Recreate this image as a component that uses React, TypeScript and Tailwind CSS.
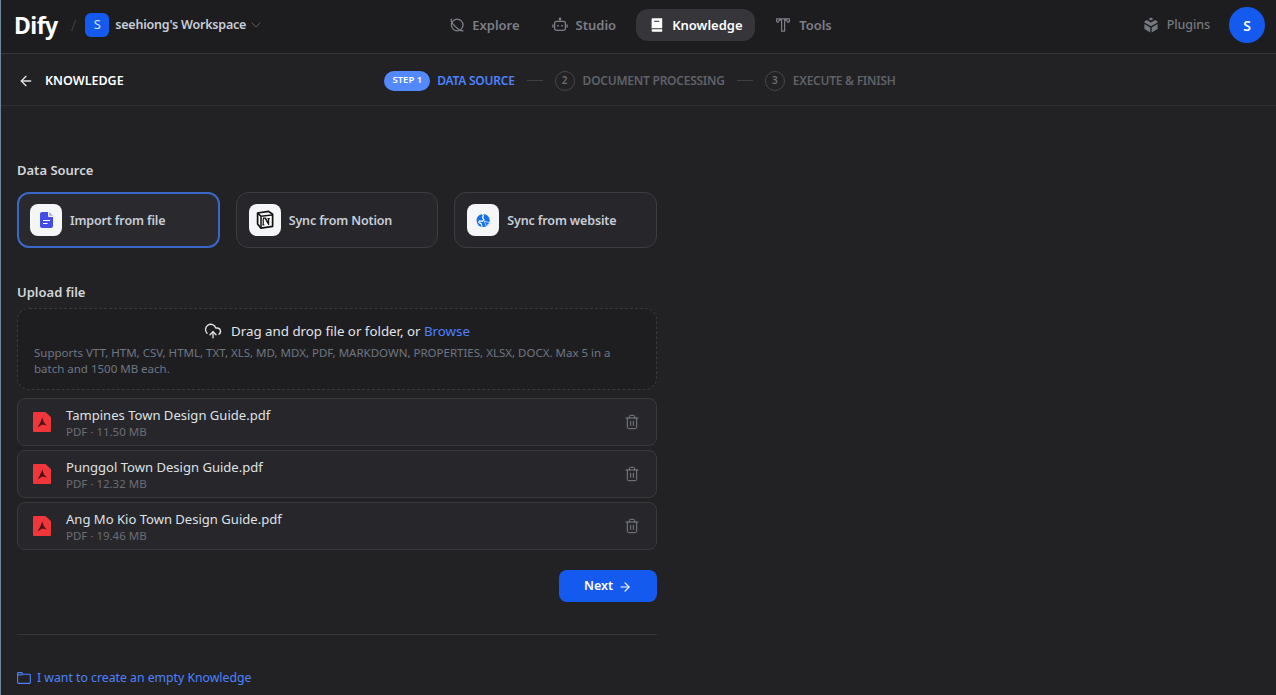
import { ArrowLeft, ArrowRight, ChevronDown, CloudUpload, Trash2 } from "lucide-react";

const font = "font-['Noto_Sans',sans-serif]";

function ExploreIcon() {
  return (
    <svg viewBox="0 0 16 16" className="h-4 w-4 shrink-0" fill="none" stroke="currentColor" strokeWidth="1.3">
      <circle cx="8.2" cy="8" r="5.8" />
      <path d="M2.6 1.8 C1.4 3 3.4 6.6 6.4 9.6 C9.4 12.6 13 14.6 14.4 13.4" />
    </svg>
  );
}

function StudioIcon() {
  return (
    <svg viewBox="0 0 16 16" className="h-4 w-4 shrink-0" fill="none" stroke="currentColor" strokeWidth="1.3">
      <rect x="2.6" y="4.4" width="10.8" height="9" rx="1.8" />
      <path d="M8 4.2V2.2M.9 7.6v2.8M15.1 7.6v2.8" />
      <circle cx="8" cy="1.8" r="0.7" fill="currentColor" />
      <path d="M6 8v1.6M10 8v1.6" strokeWidth="1.6" />
    </svg>
  );
}

function BookIcon() {
  return (
    <svg viewBox="0 0 16 16" className="h-4 w-4 shrink-0" fill="currentColor">
      <path d="M3.8 1.3h9.4v10H4.2c-.7 0-1.2.1-1.6.4V2.5c0-.7.5-1.2 1.2-1.2z" />
      <path d="M2.6 13.2c0-.7.6-1 1.4-1h9.2v2.5H4c-.8 0-1.4-.5-1.4-1.5z" />
      <path d="M5.2 4.3h5" stroke="#35353a" strokeWidth="1.1" />
    </svg>
  );
}

function ToolsIcon() {
  return (
    <svg viewBox="0 0 16 16" className="h-4 w-4 shrink-0" fill="none" stroke="currentColor" strokeWidth="1.2" strokeLinejoin="round">
      <path d="M1.6 1.8h12.8v2.6l-1.4 1-1.6-2.2H9.6v11h-3v-11H4.4L2.8 5.4l-1.2-1z" />
    </svg>
  );
}

function CubeIcon() {
  return (
    <svg viewBox="0 0 16 16" className="h-4 w-4 shrink-0" fill="currentColor">
      <path d="M8 .6l2.5 1.4L8 3.4 5.5 2z" />
      <path d="M3.8 3l4.2 2.4L12.2 3l2.4 1.4v1.2L8 9.3 1.4 5.6V4.4z" />
      <path d="M1.4 7.1l5.9 3.3v5L1.4 12zM14.6 7.1l-5.9 3.3v5l5.9-3.4z" />
    </svg>
  );
}

function FileIcon() {
  return (
    <svg viewBox="0 0 13 16" className="h-4 w-[13px]">
      <path d="M2 0h6v3.4c0 .9.7 1.6 1.6 1.6H13v9a2 2 0 0 1-2 2H2a2 2 0 0 1-2-2V2a2 2 0 0 1 2-2z" fill="#444ce7" />
      <path d="M9.2 0L13 3.8H9.2z" fill="#a4a9f5" />
      <path d="M3 8.5h7M3 11.5h4.5" stroke="#fff" strokeWidth="1.2" />
    </svg>
  );
}

function NotionIcon() {
  return (
    <svg viewBox="0 0 20 20" className="h-5 w-5">
      <path d="M2.6 3L13.6 1.4 17.6 4.2V16.4L6 18.2 2.6 14z" fill="#fff" stroke="#111" strokeWidth="1.7" strokeLinejoin="round" />
      <path d="M3 3.4L6 6.2 17.2 5M6 6.2V17.6" fill="none" stroke="#111" strokeWidth="1.5" />
      <path d="M8 8.2h2.4l3.2 5V8.8M14.8 8.6h-2.4M8.2 8.4v6M7.4 14.8h2M10.2 8.4l3.6 6.2" fill="none" stroke="#111" strokeWidth="1.2" />
    </svg>
  );
}

function GlobeIcon() {
  return (
    <svg viewBox="0 0 16 16" className="h-[15px] w-[15px]">
      <circle cx="7.6" cy="8" r="7" fill="#1570ef" />
      <path d="M6.4 1.2l1.6 1.2-1 2.6L8.4 7 6.6 9 3.6 8.4 3 10l2.6 1.6.8 3" fill="none" stroke="#fff" strokeWidth="1.3" />
      <path d="M8.6 8.4l6.8 2.4-2.8 1.2-1.2 3z" fill="#1570ef" stroke="#fff" strokeWidth="0.7" />
    </svg>
  );
}

function PdfIcon() {
  return (
    <svg viewBox="0 0 18 20" className="h-5 w-[18px] shrink-0">
      <path d="M1 0h11.5L18 5.2V19a1 1 0 0 1-1 1H1a1 1 0 0 1-1-1V1a1 1 0 0 1 1-1z" fill="#f0353b" />
      <path d="M9.3 5.6l1.5 4.6 3 3.4-4.6-1.1-4.6 2.9 2.5-4.4z" fill="#4a1218" />
    </svg>
  );
}

function FolderIcon() {
  return (
    <svg viewBox="0 0 14 12" className="h-3 w-[14px] shrink-0" fill="none" stroke="currentColor" strokeWidth="1.1">
      <path d="M.6 1.2c0-.3.3-.6.6-.6h3.6l1 1.6h6.9c.3 0 .6.3.6.6v8c0 .3-.3.6-.6.6H1.2a.6.6 0 0 1-.6-.6z" />
      <path d="M.6 2.9h5" />
    </svg>
  );
}

const sources = [
  { label: "Import from file", icon: <FileIcon />, active: true },
  { label: "Sync from Notion", icon: <NotionIcon />, active: false },
  { label: "Sync from website", icon: <GlobeIcon />, active: false },
];

const files = [
  { name: "Tampines Town Design Guide.pdf", size: "PDF · 11.50 MB" },
  { name: "Punggol Town Design Guide.pdf", size: "PDF · 12.32 MB" },
  { name: "Ang Mo Kio Town Design Guide.pdf", size: "PDF · 19.46 MB" },
];

export default function App() {
  return (
    <div className={`${font} flex h-[695px] w-full flex-col overflow-hidden border-l border-[#6f8598] bg-[#222225]`}>
      <header className="grid h-[54px] shrink-0 grid-cols-[1fr_auto_1fr] items-center border-b border-[#36363a] bg-[#1d1d20] pb-[3px] pl-[13px] pr-[11px]">
        <div className="flex items-center">
          <span className="w-[44px] text-[23px] font-bold leading-none tracking-[-0.5px] text-white">Dify</span>
          <span className="ml-[13px] text-[15px] font-light text-[#4a4a50]">/</span>
          <span className="ml-[9px] flex h-6 w-6 items-center justify-center rounded-md bg-[#155aef] text-[13px] text-[#d8e4fd]">S</span>
          <span className="ml-[6px] text-[12.5px] font-semibold tracking-[-0.2px] text-[#c8ced8]">seehiong's Workspace</span>
          <ChevronDown className="ml-[2px] h-4 w-4 text-[#5d5d63]" strokeWidth={1.5} />
        </div>
        <nav className="ml-[2px] flex items-center text-[13px] font-semibold">
          <div className="flex items-center gap-[7px] text-[#7c7f87]">
            <ExploreIcon />
            <span className="pt-[2px]">Explore</span>
          </div>
          <div className="ml-[32px] flex items-center gap-2 text-[#7c7f87]">
            <StudioIcon />
            <span className="pt-[2px]">Studio</span>
          </div>
          <div className="ml-[20px] flex h-8 w-[119px] items-center gap-[7px] rounded-xl bg-[#35353a] pl-[13px] text-white">
            <BookIcon />
            <span className="pt-[2px]">Knowledge</span>
          </div>
          <div className="ml-[20px] flex items-center gap-2 text-[#7c7f87]">
            <ToolsIcon />
            <span className="pt-[2px]">Tools</span>
          </div>
        </nav>
        <div className="flex items-center justify-end">
          <span className="text-[#75787f]"><CubeIcon /></span>
          <span className="ml-[8px] text-[12.5px] font-medium tracking-[-0.1px] text-[#75787f]">Plugins</span>
          <span className="ml-[19px] flex h-9 w-9 items-center justify-center rounded-full bg-[#155aef] text-[14px] font-semibold text-white">S</span>
        </div>
      </header>

      <div className="grid h-[52px] shrink-0 grid-cols-[1fr_auto_1fr] items-center border-b border-[#2f2f33] pl-[17px] pr-[14px] pt-[2px]">
        <div className="flex items-center text-[12.5px] font-semibold text-white">
          <ArrowLeft className="h-4 w-4 text-[#e4e4e7]" strokeWidth={2} />
          <span className="ml-[11px] pt-px">KNOWLEDGE</span>
        </div>
        <div className="flex items-center text-[12px] font-semibold tracking-[-0.25px]">
          <span className="flex h-5 w-[46px] items-center justify-center rounded-full bg-[#5289ff] text-[9.5px] tracking-normal text-white">STEP 1</span>
          <span className="ml-[7px] text-[#4d82ff]">DATA SOURCE</span>
          <span className="mx-3 h-px w-4 bg-[#3e3e43]" />
          <span className="flex h-5 w-5 items-center justify-center rounded-full border border-[#46464b] text-[10px] text-[#6b6d74]">2</span>
          <span className="ml-2 text-[#5f6168]">DOCUMENT PROCESSING</span>
          <span className="mx-3 h-px w-4 bg-[#3e3e43]" />
          <span className="flex h-5 w-5 items-center justify-center rounded-full border border-[#46464b] text-[10px] text-[#6b6d74]">3</span>
          <span className="ml-2 text-[#5f6168]">EXECUTE &amp; FINISH</span>
        </div>
        <div />
      </div>

      <main className="w-[656px] pl-4 pt-[54px]">
        <h2 className="h-[20px] text-[13px] font-semibold leading-[20px] text-[#d4d6da]">Data Source</h2>
        <div className="mt-[12px] grid grid-cols-3 gap-4">
          {sources.map((s) => (
            <div
              key={s.label}
              className={`flex h-[56px] items-center gap-2 rounded-xl text-[12.5px] font-semibold tracking-[-0.15px] text-[#c8ced8] ${
                s.active ? "border-2 border-[#3a68c8] bg-[#2a2a2e] pl-[11px]" : "border border-[#3c3c41] bg-[#27272b] pl-3"
              }`}
            >
              <span className="flex h-8 w-8 shrink-0 items-center justify-center rounded-lg bg-[#f5f6f8]">{s.icon}</span>
              <span className="pt-[2px]">{s.label}</span>
            </div>
          ))}
        </div>

        <h2 className="mt-[34px] h-[20px] text-[13px] font-semibold leading-[20px] text-[#d4d6da]">Upload file</h2>
        <div className="mt-[6px] h-[82px] rounded-xl border border-dashed border-[#39393e] bg-[#1e1e21] px-4 pt-[11px]">
          <div className="flex items-center justify-center gap-[9px] text-[13.3px] leading-[22px] text-[#e2e4e8]">
            <CloudUpload className="h-[18px] w-[18px]" strokeWidth={1.8} />
            <span>
              Drag and drop file or folder, or <span className="text-[#4d82ff]">Browse</span>
            </span>
          </div>
          <p className="mt-[3px] text-[11.5px] leading-4 text-[#6f7682]">
            Supports VTT, HTM, CSV, HTML, TXT, XLS, MD, MDX, PDF, MARKDOWN, PROPERTIES, XLSX, DOCX. Max 5 in a batch and 1500 MB each.
          </p>
        </div>

        <div className="mt-2 flex flex-col gap-1">
          {files.map((f) => (
            <div key={f.name} className="flex h-12 items-center rounded-lg border border-[#39393e] bg-[#27272b] pl-[15px] pr-[16px]">
              <PdfIcon />
              <div className="ml-[15px] flex-1">
                <div className="text-[13.05px] leading-[18px] text-[#dfe1e5]">{f.name}</div>
                <div className="text-[11.5px] leading-[15px] text-[#6b6d75]">{f.size}</div>
              </div>
              <Trash2 className="h-4 w-4 text-[#7c7f87]" strokeWidth={1.5} />
            </div>
          ))}
        </div>

        <div className="mt-5 flex justify-end">
          <button className="flex h-8 w-[98px] items-center justify-center gap-[5px] rounded-lg bg-[#155aef] pt-px text-[12.5px] font-semibold text-white">
            Next
            <ArrowRight className="h-[14px] w-[14px]" strokeWidth={2} />
          </button>
        </div>

        <div className="mt-8 h-px bg-[#36363a]" />

        <div className="mt-[34px] flex items-center gap-[6px] pt-px text-[12.25px] leading-4 text-[#4d82ff]">
          <FolderIcon />
          <span>I want to create an empty Knowledge</span>
        </div>
      </main>
    </div>
  );
}
